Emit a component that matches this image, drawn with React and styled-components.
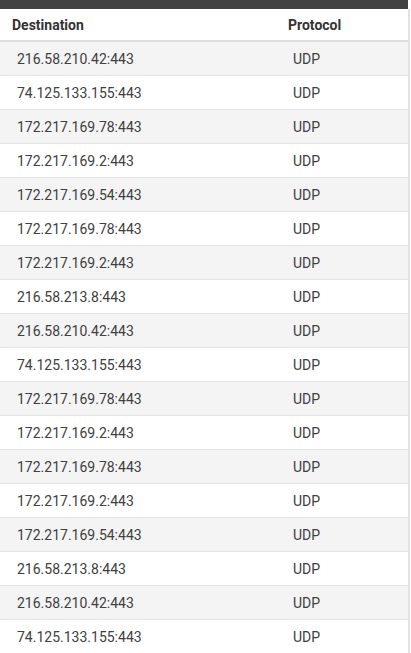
import React from 'react';
import styled, { createGlobalStyle } from 'styled-components';

const rows = [
    '216.58.210.42:443',
    '74.125.133.155:443',
    '172.217.169.78:443',
    '172.217.169.2:443',
    '172.217.169.54:443',
    '172.217.169.78:443',
    '172.217.169.2:443',
    '216.58.213.8:443',
    '216.58.210.42:443',
    '74.125.133.155:443',
    '172.217.169.78:443',
    '172.217.169.2:443',
    '172.217.169.78:443',
    '172.217.169.2:443',
    '172.217.169.54:443',
    '216.58.213.8:443',
    '216.58.210.42:443',
    '74.125.133.155:443',
];

const Global = createGlobalStyle`
    body { margin: 0; background: #fff; font-family: Roboto, "Liberation Sans", sans-serif; overflow: hidden; }
`;

const Wrap = styled.div`
    width: 410px; height: 653px; overflow: hidden;
    display: flex; flex-direction: column;
`;

const TopBar = styled.div`
    height: 9px; width: 408px; background: #424242; flex-shrink: 0;
`;

const Table = styled.div`
    width: 408px; border-right: 2px solid #e2e2e2;
    display: flex; flex-direction: column;
`;

const HeadRow = styled.div`
    display: grid; grid-template-columns: 276px 1fr;
    height: 31px; align-items: center;
    border-bottom: 2px solid #dcdcdc;
    font-size: 14px; font-weight: 700; color: #333;
`;

const HeadCell = styled.div`
    padding-left: ${p => p.$pad}px; padding-top: 1px;
`;

const Row = styled.div`
    display: grid; grid-template-columns: 276px 1fr;
    height: 33px; align-items: center;
    border-bottom: 1px solid #e3e3e3;
    background: ${p => (p.$odd ? '#f4f4f4' : '#fff')};
    font-size: 14px; color: #404040;
`;

const Cell = styled.div`
    padding-left: ${p => p.$pad}px;
`;

export default function App() {
    return (
        <Wrap>
            <Global />
            <TopBar />
            <Table>
                <HeadRow>
                    <HeadCell $pad={12}>Destination</HeadCell>
                    <HeadCell $pad={12}>Protocol</HeadCell>
                </HeadRow>
                {rows.map((dest, i) => (
                    <Row key={i} $odd={i % 2 === 0}>
                        <Cell $pad={17}>{dest}</Cell>
                        <Cell $pad={17}>UDP</Cell>
                    </Row>
                ))}
            </Table>
        </Wrap>
    );
}
